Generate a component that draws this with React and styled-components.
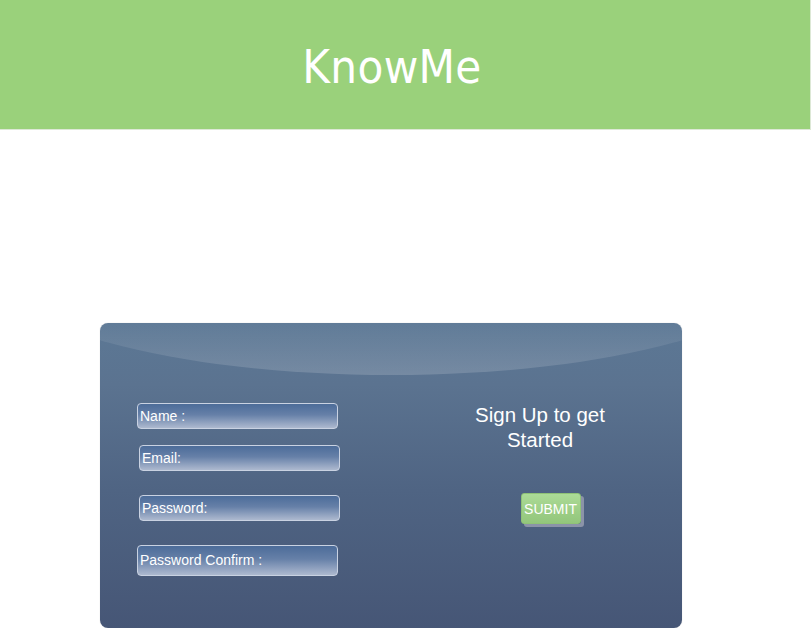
import React from "react";
import styled, { createGlobalStyle } from "styled-components";

const Global = createGlobalStyle`
  html, body { margin: 0; padding: 0; background: #ffffff; }
  body { font-family: "Liberation Sans", Arial, sans-serif; }
`;

const Header = styled.header`
  height: 129px;
  width: 810px;
  background: #9ad17b;
  border-right: 1px solid #dde8d6;
  border-bottom: 1px solid #dde8d6;
  display: flex;
  align-items: center;
  justify-content: center;
`;

const Title = styled.h1`
  margin: 3px 26px 0 0;
  font-family: "DejaVu Sans Condensed", "DejaVu Sans", sans-serif;
  font-weight: normal;
  font-size: 47px;
  color: #ffffff;
  letter-spacing: 0.3px;
`;

const Card = styled.form`
  position: relative;
  overflow: hidden;
  margin: 193px 0 0 100px;
  width: 582px;
  height: 305px;
  box-sizing: border-box;
  border-radius: 8px;
  background: linear-gradient(to bottom, #5c7895 0%, #5b7390 20%, #4f6483 55%, #465676 100%);
  box-shadow: 0 0 1px rgba(0, 0, 0, 0.25);
  display: flex;
  padding: 80px 0 0 37px;

  &::before {
    content: "";
    position: absolute;
    left: -109px;
    top: -170px;
    width: 800px;
    height: 222px;
    border-radius: 50%;
    background: linear-gradient(to bottom, rgba(255,255,255,0) 0%, rgba(255,255,255,0) 72%, rgba(255,255,255,0.06) 82%, rgba(255,255,255,0.16) 100%);
    pointer-events: none;
  }
`;

const Fields = styled.div`
  position: relative;
  display: flex;
  flex-direction: column;
  width: 204px;
`;

const Field = styled.div`
  box-sizing: border-box;
  width: 201px;
  height: ${(p) => p.$h || 26}px;
  margin-left: ${(p) => p.$shift || 0}px;
  margin-top: ${(p) => p.$top || 0}px;
  border: 1px solid #c9d2e2;
  border-radius: 4px;
  background: linear-gradient(to bottom, #4c6c99 0%, #6680a8 45%, #adb9cf 100%);
  color: #ffffff;
  font-size: 14px;
  display: flex;
  align-items: center;
  padding: 0 0 1px 2px;
`;

const Side = styled.div`
  position: relative;
  width: 200px;
  margin-left: 99px;
  display: flex;
  flex-direction: column;
  align-items: center;
`;

const Lead = styled.p`
  margin: -1px 0 0 0;
  font-size: 20.5px;
  line-height: 25px;
  text-align: center;
  color: #ffffff;
`;

const Submit = styled.button`
  margin: 41px 0 0 21px;
  width: 60px;
  height: 31px;
  box-sizing: border-box;
  border: 1px solid #8fc276;
  border-radius: 3px;
  background: linear-gradient(to bottom, #acdb97 0%, #9fd088 50%, #93c67c 100%);
  box-shadow: 3px 3px 0 #8b93a8;
  color: #ffffff;
  font-family: "Liberation Sans", Arial, sans-serif;
  font-size: 14px;
  padding: 0;
  cursor: pointer;
`;

export default function App() {
  return (
    <>
      <Global />
      <Header>
        <Title>KnowMe</Title>
      </Header>
      <Card onSubmit={(e) => e.preventDefault()}>
        <Fields>
          <Field>Name :</Field>
          <Field $shift={2} $top={16}>Email:</Field>
          <Field $shift={2} $top={24}>Password:</Field>
          <Field $top={24} $h={31}>Password Confirm :</Field>
        </Fields>
        <Side>
          <Lead>
            Sign Up to get
            <br />
            Started
          </Lead>
          <Submit type="submit">SUBMIT</Submit>
        </Side>
      </Card>
    </>
  );
}
